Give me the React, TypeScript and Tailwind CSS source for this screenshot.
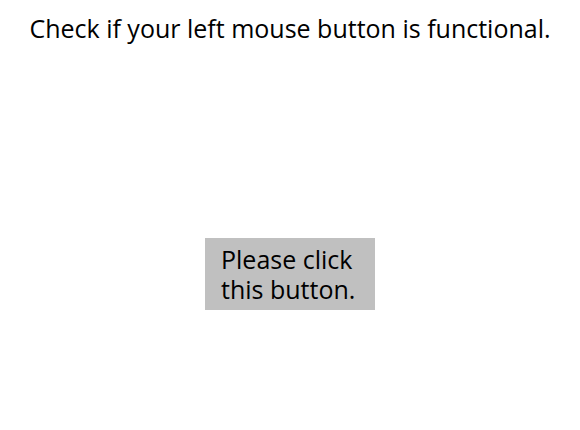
export default function App() {
  return (
    <div
      className="flex h-[430px] w-[580px] flex-col items-center bg-white text-black"
      style={{ fontFamily: '"Open Sans", sans-serif' }}
    >
      <h1 className="mt-[11px] text-[25px] leading-[34px] font-normal">
        Check if your left mouse button is functional.
      </h1>
      <button className="mt-[193px] w-[170px] bg-[#c0c0c0] px-4 py-[6px] text-left text-[25px] leading-[30px]">
        Please click this button.
      </button>
    </div>
  )
}
